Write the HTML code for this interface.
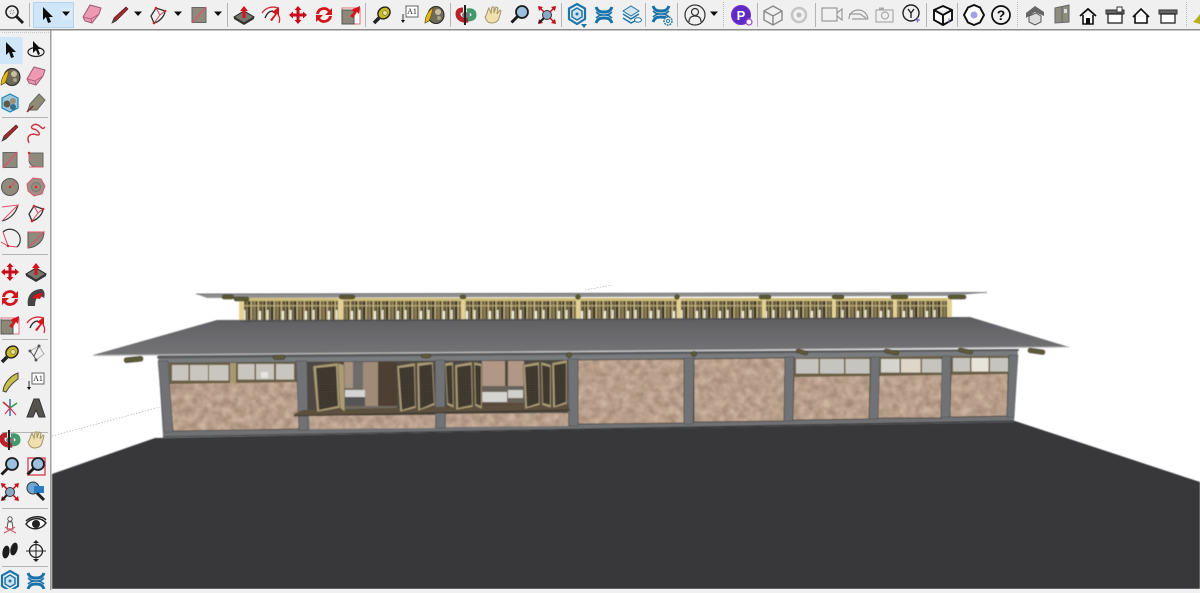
<!DOCTYPE html>
<html lang="en">
<head>
<meta charset="utf-8">
<title>SketchUp</title>
<style>
html,body{margin:0;padding:0;background:#fff;width:1200px;height:593px;overflow:hidden}
svg{display:block}
</style>
</head>
<body>
<svg width="1200" height="593" viewBox="0 0 1200 593" xmlns="http://www.w3.org/2000/svg">
<defs>
<filter id="bl" x="-5%" y="-5%" width="110%" height="110%"><feGaussianBlur stdDeviation="0.45"/></filter>
<filter id="ib" x="-20%" y="-20%" width="140%" height="140%"><feGaussianBlur stdDeviation="0.35"/></filter>
<filter id="brick2" x="0" y="0" width="100%" height="100%" color-interpolation-filters="sRGB">
<feTurbulence type="fractalNoise" baseFrequency="0.13" numOctaves="2" seed="7"/>
<feColorMatrix type="matrix" values="0.25 0 0 0 0.6  0.25 0 0 0 0.5  0.25 0 0 0 0.42  0 0 0 0 1"/>
</filter>
<pattern id="slat" x="240" y="298" width="23" height="23" patternUnits="userSpaceOnUse">
<rect width="23" height="23" fill="#cdbb78"/>
<rect x="0" y="3" width="2.600" height="20" fill="#423b2e"/>
<rect x="2.600" y="3" width="1.200" height="20" fill="#c8b97e"/>
<rect x="3.800" y="12" width="1.800" height="11" fill="#e8e5d8"/>
<rect x="3.800" y="3" width="1.800" height="9" fill="#5e533f"/>
<rect x="5.600" y="3" width="1.600" height="20" fill="#5d5240"/>
<rect x="7.700" y="3" width="2.800" height="20" fill="#3a3329"/>
<rect x="10.500" y="3" width="1.200" height="20" fill="#c8b97e"/>
<rect x="11.700" y="3" width="1.600" height="20" fill="#6f6449"/>
<rect x="13.300" y="3" width="1.400" height="20" fill="#6f6248"/>
<rect x="15.300" y="3" width="2.400" height="20" fill="#4c4334"/>
<rect x="17.700" y="3" width="1.300" height="20" fill="#c4b578"/>
<rect x="19" y="13" width="2" height="10" fill="#f0eee2"/>
<rect x="19" y="3" width="2" height="10" fill="#6a5f47"/>
<rect x="21" y="3" width="1.500" height="20" fill="#554a39"/>
<rect x="0" y="7" width="23" height="1.500" fill="#c9b97c" opacity=".7"/>
</pattern>
<pattern id="mesh" width="2.400" height="2.400" patternUnits="userSpaceOnUse">
<rect width="2.400" height="2.400" fill="#39332a"/><rect width="1" height="1" fill="#5c5344"/>
</pattern>
<linearGradient id="roof" x1="0" y1="0" x2="0" y2="1"><stop offset="0" stop-color="#5f5f62"/><stop offset="0.6" stop-color="#6c6c6f"/><stop offset="1" stop-color="#747477"/></linearGradient>
<clipPath id="walls">
<polygon points="169,383 298,381 299,429 173,431"/>
<polygon points="309,416 435,415 435,428 310,429"/>
<polygon points="446,414 568,413 568,426 446,427"/>
<polygon points="578,360 684,359 684,423 578,424"/>
<polygon points="694,359 785,358 784,421 694,422"/>
<polygon points="794,376 870,375 869,419 793,420"/>
<polygon points="879,375 942,374 941,418 878,418"/>
<polygon points="951,374 1008,373 1007,416 950,417"/>
</clipPath>

<g id="arrow"><path d="M-4-8V5l3-3 2 6 3-1-2-5h4z" fill="#111"/></g>
<g id="mag"><circle cx="2" cy="-2" r="6" fill="#9dbfe2" stroke="#1d1d1d" stroke-width="1.800"/><path d="M-2 2-8.500 8.500" stroke="#1d1d1d" stroke-width="3"/></g>
<g id="magw"><circle cx="-2" cy="-2" r="6" fill="#f0f0f0" stroke="#222" stroke-width="1.600"/><circle cx="-2" cy="-2" r="2" fill="none" stroke="#777" stroke-dasharray="1 1"/><path d="M2 2 9 9" stroke="#1d1d1d" stroke-width="3"/></g>
<g id="dd"><path d="M-4-2H4L0 2.500z" fill="#111"/></g>
<g id="erase"><path d="M-9 3-2-9 9-6 7 0 0 9-7 7z" fill="#ee9ab4" stroke="#9a5b70"/><path d="M-9 3-1 5 0 9M-1 5 7 0" fill="none" stroke="#b55f7c"/></g>
<g id="pencil"><path d="M-8 8-6 3 6-8 8-6-4 6z" fill="#a8282e" stroke="#4a2020" stroke-width=".7"/><path d="M-8 8-6 3-4 6z" fill="#444"/></g>
<g id="pie"><path d="M-7 1-2-7 7-4C7 1 1 7-4 8z" fill="none" stroke="#333" stroke-width="1.300"/><path d="M-2-7 2 0-4 8M2 0 7-4" stroke="#d9445c" fill="none"/><circle cx="-2" cy="-7" r="1.300" fill="#d22"/><circle cx="7" cy="-4" r="1.300" fill="#d22"/><circle cx="-4" cy="8" r="1.300" fill="#d22"/></g>
<g id="rect"><rect x="-7" y="-7.500" width="14" height="15" fill="#8e8a7c" stroke="#666"/><path d="M-7 8 7-8" stroke="#e8506a" stroke-width="1.300"/></g>
<g id="push"><path d="M-10 2 0-4 10 2 0 8z" fill="#77766c" stroke="#222"/><path d="M-10 2v2L0 10 10 4V2L0 8z" fill="#333"/><path d="M-1.500 3V-4H-4L0-9 4-4H1.500V3z" fill="#d3121d"/></g>
<g id="follow"><path d="M-9-2C-5-8 2-9 7-7M8 8C9 5 9 2 7 0" fill="none" stroke="#d22a36" stroke-width="1.300"/><path d="M-6 3C-4-2-1-4 2-4" fill="none" stroke="#222" stroke-width="1.300"/><path d="M-1 5 4-1 1-3 8-8 8 1 6-1 1 6z" fill="#d3121d"/></g>
<g id="move"><path d="M0-9 3.500-5H1.500V-1.500H5V-3.500L9 0 5 3.500V1.500H1.500V5H3.500L0 9-3.500 5H-1.500V1.500H-5V3.500L-9 0-5-3.500V-1.500H-1.500V-5H-3.500z" fill="#c9101c"/></g>
<g id="rot"><path d="M-8-1A8 8 0 0 1 6-5L8-7V0H1L4-3A5 5 0 0 0-5-1z" fill="#d3121d"/><path d="M8 1A8 8 0 0 1-6 5L-8 7V0H-1L-4 3A5 5 0 0 0 5 1z" fill="#d3121d"/></g>
<g id="scale"><rect x="-9" y="-7" width="18" height="16" fill="#fff" stroke="#e2707f"/><rect x="-9" y="-5" width="12" height="14" fill="#8b8878" stroke="#555"/><path d="M-1 1 3-3 0-5 9-9 8-1 6-3 2 3z" fill="#d3121d"/></g>
<g id="tape"><path d="M-8 8-3 3" stroke="#222" stroke-width="3.500"/><ellipse cx="2" cy="-2" rx="6.500" ry="5.500" fill="#c8ba22" stroke="#222" stroke-width="1.400" transform="rotate(-40 2 -2)"/><circle cx="3" cy="-2" r="2.300" fill="#eee38a" stroke="#666" stroke-width=".6"/></g>
<g id="text3"><rect x="-4" y="-8" width="12" height="11" fill="#fff" stroke="#666"/><text x="2" y="0" font-family="Liberation Serif,serif" font-size="8" text-anchor="middle" fill="#222">A1</text><path d="M-7 0V7" stroke="#333"/><path d="M-9 6H-5L-7 9z" fill="#111"/></g>
<g id="paint"><ellipse cx="2" cy="0" rx="8" ry="8.500" fill="#6d6a58" stroke="#222"/><circle cx="4" cy="-3" r="3" fill="#c9bda0"/><circle cx="5" cy="3" r="2" fill="#a9a08a"/><path d="M-9 8C-9 1-5-5-1-7-2-2-3 2-5 6z" fill="#e2b61e" stroke="#6a5610" stroke-width=".7"/></g>
<g id="orbit"><ellipse cx="0" cy="0" rx="4" ry="3" fill="#777"/><path d="M1-4C6-5 8-3 8 0S5 4 1 4" fill="none" stroke="#3f9a6b" stroke-width="5"/><path d="M2 5C-4 6-8 3-8-1-8-4-6-5-3-5" fill="none" stroke="#b9242c" stroke-width="5"/><path d="M-1-10V10" stroke="#222" stroke-width="2"/></g>
<g id="hand"><path d="M-8 2C-6 0-6-3-5-5L-4-7-2-2-1-8 1-8 1-2 3-8 5-7 4-1 7-5 8-4 6 3C5 7 2 8-2 8-5 8-7 5-8 2z" fill="#efe0ad" stroke="#a3946a"/></g>
<g id="zext"><circle cx="0" cy="0" r="4.500" fill="#89a9c9" stroke="#333"/><path d="M-9-9-4-8-8-4zM9-9 8-4 4-8zM9 9 4 8 8 4zM-9 9-8 4-4 8z" fill="#c3101c"/><path d="M-8-8-3-3M8-8 3-3M8 8 3 3" stroke="#c3101c" stroke-width="1.500"/><path d="M-8 8-3 3" stroke="#222" stroke-width="2.200"/></g>
<g id="wh"><path d="M0-10 8-5.500V5L0 10-8 5V-5.500z" fill="none" stroke="#1f75a8" stroke-width="2.200"/><path d="M0-6 5-3V3L0 6-5 3V-3z" fill="#cfe3ef" stroke="#1f75a8" stroke-width="1.500"/><circle cx="0" cy="0" r="1.500" fill="#1f75a8"/></g>
<g id="ext"><path d="M-8-8C-6-3-3-3 0-3S6-3 8-8M-8 8C-6 3-3 3 0 3S6 3 8 8" fill="none" stroke="#1770a9" stroke-width="3"/><path d="M-8-3C-5 0-3 0 0 0S5 0 8-3M-8 3C-5 0-3 0 0 0S5 0 8 3" fill="none" stroke="#1770a9" stroke-width="1.600"/></g>
<g id="lay"><path d="M-8-4 0-9 8-4 0 1z" fill="#d4e5ef" stroke="#1f75a8"/><path d="M-8-1 0 4 8-1M-8 3 0 8 4 6" fill="none" stroke="#1f75a8" stroke-width="1.500"/><ellipse cx="7" cy="5" rx="3.500" ry="2.200" fill="#fff" stroke="#1f75a8"/></g>
<g id="gear"><circle r="4" fill="#eee" stroke="#2f7fa8" stroke-width="1.500" stroke-dasharray="2 .8"/><circle r="1.500" fill="none" stroke="#2f7fa8"/></g>
<g id="user"><circle r="10" fill="none" stroke="#333" stroke-width="1.200"/><circle cy="-3" r="3.500" fill="none" stroke="#333" stroke-width="1.200"/><path d="M-6 7C-6 2-3 1 0 1S6 2 6 7" fill="none" stroke="#333" stroke-width="1.200"/></g>
<g id="cube"><path d="M0-9 9-4V5L0 10-9 5V-4zM-9-4 0 1 9-4M0 1V10" fill="none" stroke="#888" stroke-width="1.400"/></g>
<g id="cubeb"><path d="M0-9 9-5V5L0 10-9 5V-5zM-9-5 0 0 9-5M0 0V10" fill="#fff" stroke="#111" stroke-width="1.900"/><path d="M6 3V8" stroke="#7a72c8"/></g>
<g id="house"><path d="M-9-2 0-9 9-3 9 1 0-3-9 3z" fill="#666"/><path d="M-6 1 1-2 6 1V7L0 10-6 7z" fill="#ddd" stroke="#555"/></g>
<g id="home"><path d="M-8 0 0-7 8 0" fill="none" stroke="#111" stroke-width="1.800"/><path d="M-5-1V8H5V-1" fill="#fff" stroke="#111" stroke-width="1.600"/><rect x="-2" y="2" width="4" height="6" fill="#111"/></g>
<g id="house2"><path d="M-9-1V-5H9V-1z" fill="#666" stroke="#333"/><rect x="-7" y="-1" width="14" height="9" fill="#fff" stroke="#222" stroke-width="1.300"/></g>
</defs>

<!-- canvas -->
<rect width="1200" height="593" fill="#fff"/>

<!-- guide lines -->
<path d="M52 436 160 407" stroke="#bbb" stroke-width=".8" stroke-dasharray="1.500 1.500"/>
<path d="M585 290 612 285" stroke="#bbb" stroke-width=".8" stroke-dasharray="1.500 1.500"/>

<g filter="url(#bl)">
<!-- ground -->
<polygon points="52,474 155,438 1015,421 1200,482 1200,589 52,589" fill="#39383a"/>

<!-- upper clerestory -->
<rect x="240" y="298" width="711" height="22" fill="url(#slat)"/>
<g fill="#e3d294">
<rect x="239" y="298" width="5" height="22"/><rect x="338" y="298" width="5" height="22"/><rect x="461" y="298" width="4" height="22"/><rect x="576" y="298" width="4" height="22"/><rect x="677" y="298" width="4" height="22"/><rect x="762" y="298" width="4" height="22"/><rect x="832" y="298" width="4" height="22"/><rect x="893" y="298" width="4" height="22"/><rect x="947" y="298" width="5" height="22"/>
</g>
<polygon points="196,294 987,292.500 950,296 207,298" fill="#8f8f91"/>
<path d="M196 294 987 292.500" stroke="#5a5a5c" stroke-width=".7"/>

<!-- upper logs -->
<g fill="#5b5833" stroke="#2d2c1c" stroke-width=".5">
<rect x="222" y="295" width="12" height="4" rx="2"/><rect x="234" y="297" width="15" height="4" rx="2"/>
<rect x="339" y="295" width="16" height="4" rx="2"/><rect x="460" y="295" width="6" height="4" rx="2"/>
<circle cx="578" cy="297" r="2.500"/><circle cx="677" cy="297" r="2.500"/>
<rect x="759" y="295" width="12" height="4" rx="2"/><rect x="832" y="295" width="12" height="4" rx="2"/>
<rect x="891" y="295" width="17" height="4" rx="2"/><rect x="948" y="295" width="18" height="4" rx="2"/>
</g>

<!-- wall base -->
<polygon points="158,355 1018,349 1014,422 163,437" fill="#797b7e"/>
<polygon points="163,432 1014,416 1014,422 163,437" fill="#6f7174"/>
<path d="M163 437 1014 421" stroke="#2c2c2c" stroke-width="1"/>
<path d="M168 363 1010 357" stroke="#4b4b4d" stroke-width=".8"/>

<!-- openings -->
<polygon points="307,362 435,361 435,415 307,416" fill="#4e4a42"/>
<polygon points="445,361 568,360 568,413 445,414" fill="#4e4a42"/>
<rect x="345" y="362" width="52" height="48" fill="#6f6a60"/>
<rect x="344" y="362" width="9" height="26" fill="#a89280"/>
<rect x="353" y="362" width="10" height="26" fill="#6e6c6a"/>
<rect x="363" y="362" width="15" height="44" fill="#a08a78"/>
<rect x="378" y="362" width="19" height="44" fill="#4e3f33"/>
<rect x="345" y="390" width="20" height="7" fill="#d4d4d4"/>
<rect x="345" y="397" width="20" height="9" fill="#555"/>
<rect x="482" y="361" width="42" height="25" fill="#b09786"/>
<rect x="505" y="361" width="3" height="44" fill="#55473a"/>
<rect x="482" y="386" width="42" height="19" fill="#67625a"/>
<rect x="482" y="392" width="25" height="10" fill="#d4d4d0"/>
<rect x="508" y="390" width="15" height="8" fill="#cfcfcc"/>
<rect x="482" y="403" width="42" height="3" fill="#5a4a3a"/>

<!-- masonry panels -->
<g clip-path="url(#walls)">
<rect x="160" y="350" width="860" height="90" fill="#b29a88"/>
<rect x="160" y="350" width="860" height="90" filter="url(#brick2)"/>
</g>
<g fill="none" stroke="#3a3630" stroke-width=".7">
<polygon points="169,383 298,381 299,429 173,431"/>
<polygon points="578,360 684,359 684,423 578,424"/>
<polygon points="694,359 785,358 784,421 694,422"/>
<polygon points="794,376 870,375 869,419 793,420"/>
<polygon points="879,375 942,374 941,418 878,418"/>
<polygon points="951,374 1008,373 1007,416 950,417"/>
</g>

<!-- windows -->
<polygon points="169,363 296,362 298,382 170,384" fill="#6a5f45"/>
<rect x="230" y="363" width="6" height="20" fill="#a79a72"/>
<g fill="#c9c6bf">
<rect x="172" y="365" width="16.500" height="15.500"/><rect x="190" y="365" width="18" height="15.500"/><rect x="209" y="365" width="19.500" height="15.500"/>
<rect x="238" y="364" width="16.500" height="15.500"/><rect x="256" y="364" width="18" height="15.500"/><rect x="276" y="364" width="18" height="15.500"/>
</g>
<rect x="261" y="372" width="7" height="6" fill="#e4e4e0"/>
<polygon points="794,358 871,357 870,376 794,377" fill="#6a5f45"/>
<polygon points="879,357 943,356 942,375 879,376" fill="#6a5f45"/>
<polygon points="951,356 1010,356 1008,374 951,375" fill="#6a5f45"/>
<g fill="#c6c4be">
<rect x="796" y="359" width="22.500" height="14.500"/><rect x="820" y="359" width="24" height="14.500"/><rect x="845.500" y="359" width="24" height="14.500"/>
<rect x="881" y="359" width="18.500" height="13.500" fill="#d6d4cf"/><rect x="901" y="359" width="19.500" height="13.500" fill="#ded6c8"/><rect x="922" y="359" width="19.500" height="13.500"/>
<rect x="953" y="358" width="17" height="13.500"/><rect x="971.500" y="358" width="17" height="13.500" fill="#e7e4da"/><rect x="990" y="358" width="18" height="13.500"/>
</g>

<!-- columns -->
<g fill="#6f7276" stroke="#3c3c3e" stroke-width=".4">
<polygon points="158,361 168,361 173,432 164,432"/>
<polygon points="296,361 307,361 308,430 299,430"/>
<polygon points="435,360 445,360 445,428 436,428"/>
<polygon points="568,359 578,359 578,426 569,426"/>
<polygon points="684,358 694,358 693,424 684,424"/>
<polygon points="785,357 794,357 793,421 784,421"/>
<polygon points="871,357 880,357 878,419 869,419"/>
<polygon points="942,356 951,356 950,417 941,417"/>
<polygon points="1009,355 1018,355 1014,417 1007,417"/>
</g>

<!-- sill -->
<polygon points="294,414 303,410 568,404 570,410 294,416" fill="#5c4f3c"/>
<path d="M294 416 570 410" stroke="#2e2a22" stroke-width=".8"/>

<!-- doors -->
<g fill="#ab9c74" stroke="#5b5240" stroke-width=".5">
<polygon points="313,366 338,363 340,408 317,412"/><polygon points="338,363 344,365 345,412 340,408"/>
<polygon points="397,366 415,363 416,408 400,412"/><polygon points="417,363 433,362 435,405 418,411"/>
<polygon points="445,363 453,362 454,408 447,405"/><polygon points="455,365 472,362 473,407 456,410"/><polygon points="474,362 482,364 482,409 475,406"/>
<polygon points="523,365 539,362 540,405 525,409"/><polygon points="541,362 551,365 551,408 542,405"/><polygon points="552,363 567,360 567,404 553,408"/>
</g>
<g fill="url(#mesh)">
<polygon points="316,368 336,366 338,406 319,410"/>
<polygon points="399,368 414,366 415,406 402,410"/><polygon points="419,366 432,364 434,403 420,409"/>
<polygon points="446,366 452,365 453,405 448,403"/><polygon points="457,367 471,365 472,405 458,408"/><polygon points="475,365 481,366 481,406 476,404"/>
<polygon points="525,367 538,365 539,403 527,407"/><polygon points="542,365 550,367 550,405 543,403"/><polygon points="554,365 566,363 566,402 555,406"/>
</g>

<!-- main roof -->
<polygon points="157,356 1019,349 1019,351 157,358.500" fill="#4a4a4c" opacity=".7"/>
<polygon points="93,355 217,320 970,317 1069,347" fill="url(#roof)"/>
<path d="M93 355.500 1069 347" stroke="#b7b7b7" stroke-width="1.100"/>
<path d="M240 321 960 318" stroke="#3f3f41" stroke-width=".8"/>

<!-- main logs -->
<g fill="#5c5a38" stroke="#2d2c1c" stroke-width=".5">
<rect x="124" y="357" width="19" height="5" rx="2.500" transform="rotate(-6 133 359)"/>
<rect x="273" y="355" width="12" height="4.500" rx="2"/><rect x="421" y="354" width="10" height="4" rx="2"/>
<circle cx="569" cy="355" r="2.700"/><circle cx="694" cy="354" r="2.700"/>
<rect x="796" y="350" width="12" height="4" rx="2" transform="rotate(15 802 352)"/>
<rect x="884" y="350" width="15" height="4" rx="2" transform="rotate(12 891 352)"/>
<rect x="958" y="349" width="15" height="4" rx="2" transform="rotate(12 965 351)"/>
<rect x="1028" y="349" width="17" height="4.500" rx="2" transform="rotate(8 1036 351)"/>
</g>
</g>

<!-- bottom strip -->
<rect x="0" y="589" width="1200" height="4" fill="#f0f0f0"/>

<!-- top toolbar -->
<rect x="0" y="0" width="1200" height="29" fill="#f0f0f0"/>
<rect x="0" y="29" width="1200" height="1.500" fill="#8c8c8c"/>
<!-- left toolbar -->
<rect x="0" y="30.500" width="50" height="559" fill="#f0f0f0"/>
<rect x="50" y="30" width="1.500" height="560" fill="#a0a0a0"/>
<path d="M2 32.500H49" stroke="#c8c8c8" stroke-dasharray="1 1"/>

<rect x="33.500" y="2.500" width="40" height="25" fill="#cfe5f8" stroke="#b3d4ef"/>
<rect x="62" y="8" width="10" height="12" fill="#dceaf7"/>
<rect x="0" y="37" width="22.500" height="27" fill="#cfe5f8"/>

<!-- separators -->
<g stroke="#b4b4b4" stroke-width="1">
<path d="M29.500 3V27M227.500 3V27M365.500 3V27M450.500 3V27M561.500 3V27M645.500 3V27M677.500 3V27M757.500 3V27M815.500 3V27M926.500 3V27M957.500 3V27"/>
<path d="M2 117.500H48M2 254.500H48M2 339.500H48M2 432.500H48M2 508.500H48M2 566.500H48"/>
</g>
<g stroke="#b9b9b9" stroke-dasharray="1 1">
<path d="M723.500 2V28M1017.500 2V28M1186.500 2V28"/>
</g>

<!-- top icons -->
<g filter="url(#ib)">
<use href="#magw" x="14" y="14"/>
<use href="#arrow" x="47" y="15"/>
<use href="#dd" x="66" y="13.500"/>
<use href="#erase" x="92" y="14"/>
<use href="#pencil" x="120" y="15"/>
<use href="#dd" x="138" y="13.500"/>
<use href="#pie" x="158" y="15"/>
<use href="#dd" x="178" y="13.500"/>
<use href="#rect" x="199" y="15"/>
<use href="#dd" x="218" y="13.500"/>
<use href="#push" x="244" y="15"/>
<use href="#follow" x="271" y="15"/>
<use href="#move" x="298" y="15"/>
<use href="#rot" x="324" y="15"/>
<use href="#scale" x="351" y="15"/>
<use href="#tape" x="382" y="15"/>
<use href="#text3" x="410" y="14"/>
<use href="#paint" x="434" y="15"/>
<use href="#orbit" x="466" y="15"/>
<use href="#hand" x="493" y="15"/>
<use href="#mag" x="520" y="14"/>
<use href="#zext" x="547" y="15"/>
<use href="#wh" x="577" y="14"/><path d="M581 24H587L584 28z" fill="#1f75a8"/>
<use href="#ext" x="604" y="15"/>
<use href="#lay" x="631" y="15"/>
<use href="#ext" x="661" y="14"/><use href="#gear" x="668" y="21"/>
<use href="#user" x="695" y="15"/>
<use href="#dd" x="714" y="13.500"/>
<circle cx="741" cy="15" r="9.500" fill="#5b2bc4"/><circle cx="741" cy="15" r="9.500" fill="none" stroke="#7a2fd0"/>
<text x="741" y="20" font-family="Liberation Sans,sans-serif" font-size="13" font-weight="700" fill="#fff" text-anchor="middle">P</text>
<circle cx="749" cy="22" r="3" fill="#fff" stroke="#a040c8" stroke-width="1.200"/>
<use href="#cube" x="773" y="15"/>
<circle cx="799" cy="15" r="7" fill="none" stroke="#c4c4c4" stroke-width="2.500"/><circle cx="799" cy="15" r="2.500" fill="#bbb"/>
<rect x="822" y="8" width="15" height="13" fill="none" stroke="#999" stroke-width="1.200"/><path d="M837 13 842 9V20L837 16" fill="none" stroke="#999" stroke-width="1.200"/>
<path d="M849 19C849 8 866 6 868 19M849 14H860L866 18M852 19H868" fill="none" stroke="#999" stroke-width="1.200"/>
<rect x="876" y="10" width="17" height="12" fill="none" stroke="#aaa" stroke-width="1.200"/><circle cx="885" cy="15.500" r="3.500" fill="none" stroke="#aaa" stroke-width="1.200"/><rect x="879" y="7.500" width="5" height="2.500" fill="#aaa"/>
<circle cx="911" cy="13" r="8" fill="none" stroke="#222" stroke-width="1.400"/><path d="M908 9 911 13 914 9M911 13V18" fill="none" stroke="#222" stroke-width="1.400"/><path d="M915 20H920M917.500 17.500V22.500" stroke="#7a72c8" stroke-width="1.200"/>
<use href="#cubeb" x="943" y="15"/>
<path d="M974 5 980 7.500 984 15 980 22.500 974 25 968 22.500 964 15 968 7.500z" fill="#fff" stroke="#111" stroke-width="1.900" stroke-linejoin="round"/><circle cx="974" cy="15" r="3.500" fill="#a59fe6"/>
<circle cx="1001" cy="15" r="9" fill="none" stroke="#111" stroke-width="1.700"/>
<text x="1001" y="20" font-family="Liberation Sans,sans-serif" font-size="14" font-weight="700" fill="#111" text-anchor="middle">?</text>
<use href="#house" x="1035" y="15"/>
<path d="M1055 8 1069 5V22L1055 23z" fill="#8e8c7c" stroke="#666"/><path d="M1062 7V22" stroke="#666"/><rect x="1064" y="9" width="3" height="4" fill="#ddd"/>
<use href="#home" x="1088" y="16"/>
<use href="#house2" x="1115" y="15"/><rect x="1117" y="7" width="5" height="5" fill="#fff" stroke="#333"/>
<path d="M1133 17 1141 9 1149 17M1135 15V23H1147V15" fill="#fff" stroke="#111" stroke-width="1.600"/>
<use href="#house2" x="1168" y="15"/>
<path d="M1193 22 1197 18 1200 14V24z" fill="#b8ae20"/>
</g>

<!-- left icons -->
<g filter="url(#ib)">
<use href="#arrow" x="10" y="50"/>
<g transform="translate(36 49)"><ellipse cy="3" rx="8" ry="4.500" fill="none" stroke="#222" stroke-width="1.200"/><path d="M-3-8V4l3-3 2 5 2-1-2-5h3z" fill="#111"/></g>
<use href="#paint" x="10" y="77"/>
<use href="#erase" x="36" y="76"/>
<g transform="translate(10 103)"><path d="M0-9 8-5V5L0 9-8 5V-5z" fill="#9cc7da" stroke="#1d88b8" stroke-width="1.200"/><circle cx="-3" cy="1" r="3.500" fill="#5b5a4c"/><circle cx="3" cy="-2" r="3" fill="#998f7a"/><circle cx="3" cy="4" r="3" fill="#3e6d85"/></g>
<path d="M28 110 30 104 39 94 45 100 37 110z" fill="#8e8c72" stroke="#666"/><path d="M27 112 33 106" stroke="#7b2a30" stroke-width="1.500"/>
<use href="#pencil" x="10" y="133"/>
<path d="M29 143C25 134 34 133 37 135 42 136 38 129 33 129 29 127 34 123 38 125 43 128 42 130 45 127" fill="none" stroke="#c8303e" stroke-width="1.400"/>
<use href="#rect" x="10" y="160"/>
<g transform="translate(36 160)"><path d="M-7-7H7V7H0A7 7 0 0 1-7 0z" fill="#8e8a7c" stroke="#666"/><path d="M-7-8V1M-7 7H7" stroke="#e2506a"/><circle cx="-7" cy="-7" r="1.200" fill="#d22"/></g>
<g transform="translate(10 187)"><circle r="8.500" fill="#8e8a7c" stroke="#555"/><path d="M0 0 6-6" stroke="#e2506a"/><circle r="1.200" fill="#d22"/></g>
<g transform="translate(36 187)"><path d="M-3-9 5-8 9-1 6 7-2 9-8 4-9-3z" fill="#a08f84" stroke="#d85a70"/><circle r="4.500" fill="#9c8a7e" stroke="#777"/><circle r="1.200" fill="#d22"/></g>
<g transform="translate(10 213)"><path d="M-8 8C0 6 6 0 8-8" fill="none" stroke="#333" stroke-width="1.200"/><path d="M-8-6 8-8-8 8" fill="none" stroke="#e2506a"/></g>
<use href="#pie" x="36" y="213"/>
<g transform="translate(10 240)"><path d="M-7-8A10 10 0 0 1 7 7" fill="none" stroke="#333" stroke-width="1.200"/><path d="M-7-8-2 6 7 7M-9 2-2 6" fill="none" stroke="#d9445c"/><circle cx="-2" cy="6" r="1.200" fill="#d22"/></g>
<g transform="translate(36 240)"><path d="M-8-8H8C8 0 2 7-8 8z" fill="#8e8a7c" stroke="#555"/><path d="M-8 8 8-8H-8" fill="none" stroke="#e2506a"/></g>
<use href="#move" x="10" y="272"/>
<use href="#push" x="36" y="272"/>
<use href="#rot" x="10" y="298"/>
<g transform="translate(36 298)"><path d="M-8 8C-10-4-2-9 6-9 9-7 9-3 8 0 4-3-1-2-1 8z" fill="#444"/><path d="M-4 1C-3-3 1-5 7-5L4 1-1 0z" fill="#d3121d"/></g>
<use href="#scale" x="10" y="325"/>
<use href="#follow" x="36" y="325"/>
<use href="#tape" x="10" y="354"/>
<g transform="translate(36 354)"><path d="M-6-3 3-8 8 0 0 6" fill="none" stroke="#aaa"/><path d="M-6-3-2 2 0 6M3-8-2 2" stroke="#555"/><circle cx="-6" cy="-3" r="1.500" fill="#555"/><circle cx="3" cy="-8" r="1.500" fill="#555"/><circle cx="0" cy="6" r="1.500" fill="#555"/></g>
<path d="M3 391C4 382 12 375 18 373L18 379C14 382 10 385 6 392z" fill="#c8c04a" stroke="#444"/>
<use href="#text3" x="36" y="381"/>
<g transform="translate(10 408)"><path d="M0-9V8" stroke="#3a6fb0" stroke-width="1.500"/><path d="M0 0-7-6" stroke="#c03030" stroke-width="1.500"/><path d="M0 0 7-5" stroke="#2f9a4a" stroke-width="1.500"/><path d="M0 0-5 6M0 0 6 7" stroke="#d35" stroke-width="1.200"/></g>
<g transform="translate(36 408)"><path d="M-2-9H3L9 9H3L0 2-3 9H-9z" fill="#55534d" stroke="#333"/></g>
<use href="#orbit" x="10" y="440"/>
<use href="#hand" x="36" y="440"/>
<use href="#mag" x="10" y="466"/>
<rect x="28" y="458" width="17" height="17" fill="none" stroke="#d43b50" stroke-width="1.300"/><use href="#mag" x="36" y="466"/>
<use href="#zext" x="10" y="492"/>
<g transform="translate(36 491)"><circle cx="-3" cy="-3" r="6" fill="#6fa6d6" stroke="#333"/><rect x="-2" y="-5" width="10" height="7" fill="#2a7cc4"/><path d="M1 2 8 9" stroke="#222" stroke-width="3"/></g>
<g transform="translate(10 525)"><circle cy="-6" r="2.200" fill="#fff" stroke="#555"/><path d="M-2-3H2L3 4H-3z" fill="#fff" stroke="#555"/><path d="M-6 8 5 2M6 8-5 2" stroke="#d8505e"/></g>
<g transform="translate(36 525)"><path d="M-10-1C-5-8 5-8 10-2 5 5-5 6-10-1z" fill="#fff" stroke="#222" stroke-width="1.500"/><circle cx="0" cy="-1" r="4" fill="#222"/><path d="M-10-4C-5-9 6-10 10-5" fill="none" stroke="#222" stroke-width="1.500"/></g>
<ellipse cx="6" cy="552" rx="3.500" ry="6.500" fill="#1a1a1a" transform="rotate(10 6 552)"/><ellipse cx="14" cy="549" rx="3.500" ry="6.500" fill="#1a1a1a" transform="rotate(15 14 549)"/>
<g transform="translate(36 551)"><circle r="6.500" fill="none" stroke="#222" stroke-width="1.300"/><path d="M0-10V10M-10 0H10" stroke="#222"/><path d="M-3-8H3L0-11zM-3 8H3L0 11z" fill="#222"/></g>
<use href="#wh" x="10" y="581"/>
<use href="#ext" x="36" y="581"/>
</g>
<rect x="0" y="589" width="50" height="4" fill="#f0f0f0"/>
</svg>
</body>
</html>
